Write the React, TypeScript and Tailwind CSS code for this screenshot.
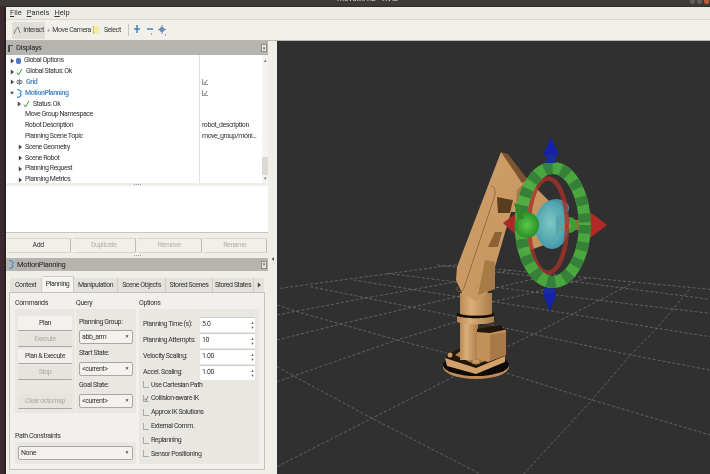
const font = { fontFamily: 'Roboto, "Noto Sans", sans-serif' }

function Arrow({ open }: { open?: boolean }) {
  return (
    <svg width="4" height="6" viewBox="0 0 5 6" className="shrink-0">
      {open ? <path d="M0 1.5h5L2.5 5z" fill="#444" /> : <path d="M1 0l4 3-4 3z" fill="#444" />}
    </svg>
  )
}

function RowIcon({ kind }: { kind: string }) {
  if (kind === 'globe') return <div className="w-[5px] h-[6px] rounded-[2px] bg-[#4f74c4] shrink-0" />
  if (kind === 'check')
    return (
      <svg width="7" height="8" viewBox="0 0 7 8" className="shrink-0">
        <path d="M1 4.5l1.5 2.5L6 1" fill="none" stroke="#3f9a3a" strokeWidth="1" />
      </svg>
    )
  if (kind === 'grid')
    return (
      <svg width="7" height="6" viewBox="0 0 7 6" className="shrink-0">
        <path d="M0 3h7M3.5 0v6M1 1.500h5M1 4.500h5" fill="none" stroke="#667" strokeWidth="0.8" />
      </svg>
    )
  return (
    <svg width="6" height="9" viewBox="0 0 6 9" className="shrink-0">
      <path d="M1 .5C5 1 6 3 4 4.500 6 6 5 8 1 8.500" fill="none" stroke="#3c8fd8" strokeWidth="1.200" />
    </svg>
  )
}

const rows = [
  { arrow: 'r', icon: 'globe', pad: 4, label: 'Global Options' },
  { arrow: 'r', icon: 'check', pad: 4, label: 'Global Status: Ok' },
  { arrow: 'r', icon: 'grid', pad: 4, label: 'Grid', blue: true, box: true },
  { arrow: 'd', icon: 'mp', pad: 4, label: 'MotionPlanning', blue: true, box: true },
  { arrow: 'r', icon: 'check', pad: 11, label: 'Status: Ok' },
  { pad: 18, label: 'Move Group Namespace' },
  { pad: 18, label: 'Robot Description', value: 'robot_description' },
  { pad: 18, label: 'Planning Scene Topic', value: 'move_group/moni...' },
  { arrow: 'r', pad: 12, label: 'Scene Geometry' },
  { arrow: 'r', pad: 12, label: 'Scene Robot' },
  { arrow: 'r', pad: 12, label: 'Planning Request' },
  { arrow: 'r', pad: 12, label: 'Planning Metrics' },
]

function MiniCheck({ checked }: { checked?: boolean }) {
  return (
    <div className="w-[6px] h-[6px] border-l border-b border-[#9a9a96] bg-white flex items-center justify-center shrink-0">
      {checked && (
        <svg width="6" height="6" viewBox="0 0 6 6">
          <path d="M1 3l1.200 2L5 .5" fill="none" stroke="#444" strokeWidth="0.8" />
        </svg>
      )}
    </div>
  )
}

function DisplaysTree() {
  return (
    <div className="h-[128px] bg-white flex overflow-hidden text-[7px] tracking-[-0.45px] text-[#333]">
      <div className="w-[194px] pt-[0.5px] border-r border-[#e2e0dc]">
        {rows.map((r) => (
          <div key={r.label} className="h-[10.8px] flex items-center gap-[2px] leading-none whitespace-nowrap" style={{ paddingLeft: r.pad }}>
            {r.arrow && <Arrow open={r.arrow === 'd'} />}
            {r.icon && <RowIcon kind={r.icon} />}
            <span className={r.blue ? 'text-[#4a86c8] font-semibold ml-[1px]' : 'ml-[1px]'}>{r.label}</span>
          </div>
        ))}
      </div>
      <div className="w-[62px] pt-[0.5px]">
        {rows.map((r) => (
          <div key={r.label} className="h-[10.8px] pl-[2px] flex items-center leading-none whitespace-nowrap">
            {r.box && <MiniCheck checked />}
            {r.value}
          </div>
        ))}
      </div>
      <div className="w-[6px] bg-[#f4f3f0] flex flex-col items-center">
        <div className="text-[5px] leading-[10px] text-[#777]">▴</div>
        <div className="mt-[92px] w-full h-[18px] bg-[#dcdad5]" />
        <div className="text-[5px] leading-[6px] text-[#777]">▾</div>
      </div>
    </div>
  )
}

function Dots({ h = 3 }: { h?: number }) {
  return (
    <div className="flex items-center justify-center gap-[1px]" style={{ height: h }}>
      <span className="w-[1px] h-[1px] bg-[#999]" />
      <span className="w-[1px] h-[1px] bg-[#999]" />
      <span className="w-[1px] h-[1px] bg-[#999]" />
      <span className="w-[1px] h-[1px] bg-[#999]" />
    </div>
  )
}

function DockClose() {
  return (
    <div className="ml-auto mr-[1px] w-[6px] h-[8px] border border-[#8d8b86] bg-[#e8e6e1] flex items-center justify-center text-[5px] leading-none text-[#444]">
      ×
    </div>
  )
}

function WideButton({ label, disabled }: { label: string; disabled?: boolean }) {
  return (
    <div
      className={`flex-1 h-[15px] flex items-center justify-center rounded-[1px] border-t border-b border-[#d6d4ce] border-r-[#bdbbb5] border-r bg-[#f1efea] text-[7px] tracking-[-0.4px] ${
        disabled ? 'text-[#b3b1ac]' : 'text-[#333]'
      }`}
    >
      {label}
    </div>
  )
}

function CmdButton({ label, disabled, h = 15 }: { label: string; disabled?: boolean; h?: number }) {
  return (
    <div
      className={`rounded-[1px] border-b border-[#aaa8a2] flex items-center justify-center text-[7px] tracking-[-0.45px] ${
        disabled ? 'bg-[#e6e4de] text-[#aeaca6]' : 'bg-[#f3f1ed] text-[#333]'
      }`}
      style={{ height: h }}
    >
      {label}
    </div>
  )
}

function Combo({ label }: { label: string }) {
  return (
    <div className="h-[14px] rounded-[2px] border border-[#a9a7a1] bg-[#f4f2ee] flex items-center justify-between px-[2px] text-[7px] tracking-[-0.4px] text-[#333]">
      <span>{label}</span>
      <span className="text-[5px] text-[#555] mr-[1px]">▼</span>
    </div>
  )
}

function Spin({ label, value }: { label: string; value: string }) {
  return (
    <div className="h-[16px] flex items-center text-[7px] tracking-[-0.4px] text-[#333]">
      <span className="w-[61px] pl-[4px] whitespace-nowrap">{label}</span>
      <div className="w-[55px] h-[15px] bg-white border-t border-[#cfcdc8] flex items-center justify-between pl-[2px] pr-[1px]">
        <span>{value}</span>
        <span className="flex flex-col text-[4px] leading-[5px] text-[#666]">
          <span>▲</span>
          <span>▼</span>
        </span>
      </div>
    </div>
  )
}

function Check({ label, checked }: { label: string; checked?: boolean }) {
  return (
    <div className="h-[13.8px] pl-[4px] flex items-center gap-[2px] text-[7px] tracking-[-0.45px] text-[#333] whitespace-nowrap">
      <div className="w-[6px] h-[7px] border-l border-b border-[#aaa] flex items-center justify-center">
        {checked && (
          <svg width="6" height="7" viewBox="0 0 6 7">
            <path d="M1 3.500l1.200 2.500L5 .5" fill="none" stroke="#444" strokeWidth="0.8" />
          </svg>
        )}
      </div>
      {label}
    </div>
  )
}

function GroupLabel({ children }: { children: string }) {
  return <div className="h-[11px] leading-[11px] text-[7px] tracking-[-0.4px] text-[#333]">{children}</div>
}

const tabs = [
  { label: 'Context', w: 32 },
  { label: 'Planning', w: 32, active: true },
  { label: 'Manipulation', w: 44 },
  { label: 'Scene Objects', w: 48 },
  { label: 'Stored Scenes', w: 47 },
  { label: 'Stored States', w: 41 },
]

function PlanningPanel() {
  return (
    <div className="flex-1 px-[3px] pb-[4px] flex flex-col min-h-0">
      <div className="h-[16px] mt-[5px] flex px-[1px] text-[7px] tracking-[-0.45px] text-[#333]">
        {tabs.map((t) => (
          <div
            key={t.label}
            className={`flex items-center justify-center whitespace-nowrap overflow-hidden border-r border-[#cfcdc7] ${
              t.active ? 'bg-[#f5f4f0] border-t border-t-[#cfcdc7]' : 'bg-[#e4e2dc] mt-[2px]'
            }`}
            style={{ width: t.w }}
          >
            {t.label}
          </div>
        ))}
        <div className="w-[10px] mt-[2px] bg-[#e4e2dc] flex items-center justify-center">
          <Arrow />
        </div>
      </div>
      <div className="flex-1 border border-[#c4c2bc] bg-[#f2f0ec] px-[5px] pt-[5px] flex gap-[3px]">
        <div className="w-[121px] flex flex-col">
          <div className="flex gap-[1px]">
            <div className="w-[60px]">
              <GroupLabel>Commands</GroupLabel>
              <div className="h-[104px] bg-[#e9e7e2] px-[3px] pt-[7px] flex flex-col">
                <CmdButton label="Plan" />
                <div className="h-[2px]" />
                <CmdButton label="Execute" disabled h={14} />
                <div className="h-[2px]" />
                <CmdButton label="Plan & Execute" />
                <div className="h-[2px]" />
                <CmdButton label="Stop" disabled h={14} />
                <div className="h-[14px]" />
                <CmdButton label="Clear octomap" disabled />
              </div>
            </div>
            <div className="w-[60px]">
              <GroupLabel>Query</GroupLabel>
              <div className="h-[104px] bg-[#e9e7e2] px-[3px] pt-[6px] flex flex-col text-[7px] tracking-[-0.4px] text-[#333]">
                <div className="h-[15px] leading-[14px]">Planning Group:</div>
                <Combo label="abb_arm" />
                <div className="h-[18px] leading-[18px]">Start State:</div>
                <Combo label="<current>" />
                <div className="h-[18px] leading-[18px]">Goal State:</div>
                <Combo label="<current>" />
              </div>
            </div>
          </div>
          <div className="h-[18px]" />
          <GroupLabel>Path Constraints</GroupLabel>
          <div className="h-[22px] bg-[#e9e7e2] px-[3px] pt-[4px]">
            <Combo label="None" />
          </div>
        </div>
        <div className="w-[121px] flex flex-col">
          <GroupLabel>Options</GroupLabel>
          <div className="h-[155px] bg-[#e9e7e2] pt-[7px]">
            <Spin label="Planning Time (s):" value="5.0" />
            <Spin label="Planning Attempts:" value="10" />
            <Spin label="Velocity Scaling:" value="1.00" />
            <Spin label="Accel. Scaling:" value="1.00" />
            <div className="-mt-[2px]" />
            <Check label="Use Cartesian Path" />
            <Check label="Collision-aware IK" checked />
            <Check label="Approx IK Solutions" />
            <Check label="External Comm." />
            <Check label="Replanning" />
            <Check label="Sensor Positioning" />
          </div>
        </div>
      </div>
    </div>
  )
}

function LeftPanel() {
  return (
    <div className="w-[262px] shrink-0 flex flex-col" style={font}>
      <div className="h-[14px] bg-[#b6b4af] flex items-center pl-[2px] gap-[3px] text-[7.5px] tracking-[-0.3px] text-[#222]">
        <div className="w-[5px] h-[7px] border-l-2 border-t border-[#45505c]" />
        Displays
        <DockClose />
      </div>
      <DisplaysTree />
      <Dots />
      <div className="h-[47px] bg-white border-b border-[#c8c6c0]" />
      <div className="flex h-[20px] pt-[5px] gap-[2px] px-[1px]">
        <WideButton label="Add" />
        <WideButton label="Duplicate" disabled />
        <WideButton label="Remove" disabled />
        <WideButton label="Rename" disabled />
      </div>
      <Dots h={5} />
      <div className="h-[13px] bg-[#b6b4af] flex items-center pl-[2px] gap-[3px] text-[7.5px] tracking-[-0.3px] text-[#222]">
        <RowIcon kind="mp" />
        MotionPlanning
        <DockClose />
      </div>
      <PlanningPanel />
    </div>
  )
}

function Toolbar() {
  return (
    <div className="h-[21px] bg-[#f2f0eb] border-b border-[#b9b7b1] flex items-center pl-[6px] text-[7px] tracking-[-0.4px] text-[#3a3a3a] whitespace-nowrap" style={font}>
      <div className="w-[33px] h-[17px] bg-[#e0ded8] flex items-center justify-center gap-[2px]">
        <svg width="8" height="9" viewBox="0 0 8 9">
          <path d="M1 8l1-3 2-3 1-1 .5 1.500L7 7" fill="none" stroke="#666" strokeWidth="0.8" />
        </svg>
        Interact
      </div>
      <div className="ml-[2px] flex items-center gap-[2px] w-[44px]">
        <svg width="7" height="9" viewBox="0 0 9 9">
          <path d="M4.500 0v9M0 4.500h9M2 2l5 5M7 2L2 7" stroke="#7a7a7a" strokeWidth="0.9" />
        </svg>
        Move Camera
      </div>
      <div className="ml-[2px] flex items-center gap-[2px]">
        <div className="w-[6px] h-[8px] bg-[#f4eda0] border-l border-[#c9b94e]" />
        <span className="w-[1px]" />
        Select
      </div>
      <div className="ml-[7px] w-[1px] h-[12px] bg-[#c5c3bd]" />
      <svg width="44" height="14" viewBox="0 0 44 14" className="ml-[3px]">
        <path d="M5 2v8M2 6h6" stroke="#4a80bb" strokeWidth="1.500" />
        <path d="M15 6h6" stroke="#4a80bb" strokeWidth="1.500" />
        <path d="M19 11h1" stroke="#555" />
        <circle cx="30" cy="6.500" r="2.500" fill="#6f8db0" />
        <path d="M30 2v9M26 6.500h8" stroke="#6f8db0" />
        <path d="M33 12h1" stroke="#555" />
      </svg>
    </div>
  )
}

const gridDown = [
  '0,350 50,378 285,505 610,672',
  '0,165 60,185 360,270 530,315 690,370 945,450 1299,555',
  '100,110 200,130 420,175 540,200 690,235 780,255 1060,315 1299,360',
  '230,90 540,140 650,155 900,195 1140,235 1299,260',
  '330,70 530,95 760,125 1000,155 1299,190',
  '480,45 740,75 1299,148',
  '530,45 1299,118',
]
const gridUp = [
  '0,650 285,505 530,380 690,290 775,250 1070,98',
  '0,395 50,378 360,270 540,215 650,155 760,130 930,85',
  '0,270 200,220 540,140 650,115 800,80',
  '0,195 260,145 540,95 700,60',
  '10,115 230,85 530,45',
  '740,672 945,450 1060,315 1140,235 1240,115',
]

function Scene() {
  return (
    <svg viewBox="277 41 433 433" className="w-full h-full block">
      <defs>
        <linearGradient id="col" x1="0" x2="1" y1="0" y2="0">
          <stop offset="0" stopColor="#b98a55" />
          <stop offset="0.35" stopColor="#dcae78" />
          <stop offset="1" stopColor="#a97c4a" />
        </linearGradient>
        <linearGradient id="gloss" x1="0" x2="1" y1="0" y2="1">
          <stop offset="0" stopColor="#d2a06a" />
          <stop offset="1" stopColor="#c0905c" />
        </linearGradient>
        <radialGradient id="ball" cx="0.45" cy="0.45" r="0.6">
          <stop offset="0" stopColor="#7fc9c4" />
          <stop offset="1" stopColor="#3f95a8" />
        </radialGradient>
        <radialGradient id="greenball" cx="0.5" cy="0.5" r="0.55">
          <stop offset="0" stopColor="#5cc94a" />
          <stop offset="1" stopColor="#258a24" />
        </radialGradient>
      </defs>

      <g transform="translate(277 250) scale(0.3333)" fill="none" stroke="#7a7a7a" strokeWidth="2" strokeDasharray="9 6">
        {gridDown.map((p) => <polyline key={p} points={p} />)}
        {gridUp.map((p) => <polyline key={p} points={p} />)}
      </g>

      {/* base */}
      <ellipse cx="476" cy="367" rx="33" ry="12" fill="#c08c55" />
      <ellipse cx="476" cy="365" rx="33" ry="11" fill="#0c0a08" />
      <path d="M445 358l13-9h42l5 7-29 12z" fill="#231507" />
      <path d="M455 355l7-5 14 10 14-8 10 2-24 11z" fill="#b88750" />
      <path d="M445 358l2 8 29 8 29-12v-6l-29 12z" fill="#d3a26c" />
      <circle cx="450" cy="355" r="3" fill="#c99a63" stroke="#111" strokeWidth="0.8" />
      <rect x="472" y="359" width="8" height="5" fill="#c99a63" stroke="#332" strokeWidth="0.5" />
      <rect x="460" y="322" width="18" height="38" fill="url(#col)" />
      <path d="M477 330h29v25l-18 7-11-3z" fill="#c29159" />
      <path d="M490 335l16-3v23l-16 6z" fill="#a97a49" />
      <path d="M477 329l24-4 3 5-14 3-13-1z" fill="#231507" />
      <path d="M457 316h37v6c-8 3-29 3-37 0z" fill="url(#col)" />
      <path d="M457 313c10 4 27 4 37 0v3c-8 3-29 3-37 0z" fill="#120b04" />

      {/* upper arm */}
      <path d="M460 293h32v21c-8 2-24 2-32 0z" fill="url(#col)" />
      <path d="M501 152l27 28 24 24-5 40-22 8-10-40-4 0-16 55-7 25-11 10-15-9-6-13 1-13 34-89z" fill="url(#gloss)" />
      <path d="M501 152l7 2 20 26-6 3z" fill="#7a5430" />
      <path d="M497 197l16 3-3 13-12 0z" fill="#5a3c1e" />
      <path d="M495 232h7l-4 15-10 0z" fill="#8a6234" />
      <path d="M485 260l10 2 0 27-17 6 4-20z" fill="#a77b48" />
      <path d="M491 186c4 0 5 6 3 12l-30 90c-2 5-8 5-7-1" fill="none" stroke="#8a6338" strokeWidth="0.8" />
      <path d="M517 190l9-9 6 5-8 15-8 3z" fill="#a87c4a" />

      {/* back half of the markers */}
      <path d="M503 223l12-9v20z" fill="#a82a25" />
      <path d="M556 220h36v10h-36z" fill="#a0692f" />
      <path d="M590 212l17 13-17 13z" fill="#b32a25" />

      {/* sphere and handles */}
      <ellipse cx="556" cy="208" rx="13" ry="9" fill="#4a93a2" />
      <circle cx="569" cy="225" r="8" fill="#3c9f33" />
      <ellipse cx="552" cy="225" rx="17" ry="24" fill="url(#ball)" />
      <path d="M560 215h8v16h-8l-4 6 0-20z" fill="#55a7ac" />
      <circle cx="567" cy="226" r="3.500" fill="#b98d5e" />
      <circle cx="567" cy="226" r="1.500" fill="#8c6236" />

      {/* rings */}
      <ellipse cx="548" cy="225.500" rx="19" ry="47" fill="none" stroke="#a8322b" strokeWidth="4.500" opacity="0.8" />
      <ellipse cx="552.700" cy="225" rx="32" ry="57" fill="none" stroke="#4cae40" strokeWidth="12" opacity="0.95" />
      <ellipse cx="552.700" cy="225" rx="32" ry="57" fill="none" stroke="#37803a" strokeWidth="12" pathLength="100" strokeDasharray="3 3" />

      {/* left handle sits over the ring */}
      <ellipse cx="527" cy="225" rx="12" ry="13" fill="url(#greenball)" />
      <path d="M514 203l6 2 4 14-6 0z" fill="#2f8a2a" />

      {/* blue arrows */}
      <path d="M551 137l8 18h-16z" fill="#1322a8" />
      <rect x="546" y="155" width="10" height="8" fill="#1b2b9a" />
      <path d="M543 293h14l-7.500 19z" fill="#1322a8" />
      <rect x="544" y="288" width="11" height="5" fill="#1b2b9a" />
    </svg>
  )
}

export default function App() {
  return (
    <div className="w-[710px] h-[474px] flex flex-col overflow-hidden bg-[#f0eee9] blur-[0.3px]">
      <div className="h-[7px] bg-[#3c3b37] border-b border-[#2e2d2a] flex overflow-hidden" style={font}>
        <div className="w-[337px]" />
        <div className="-mt-[6px] text-[8px] leading-[10px] text-[#dedcd6]">moveit.rviz - RViz</div>
        <div className="ml-auto flex gap-[2px] pr-[1px]">
          <span className="w-[5px] h-[4px] rounded-b-full bg-[#5f5e5a]" />
          <span className="w-[5px] h-[4px] rounded-b-full bg-[#5f5e5a]" />
          <span className="w-[5px] h-[4px] rounded-b-full bg-[#c0583a]" />
        </div>
      </div>
      <div className="flex-1 flex min-h-0">
        <div className="w-[6px] shrink-0 flex">
          <div className="w-[4px] bg-[#3b2b30]" />
          <div className="w-[2px] bg-[#26221f]" />
        </div>
        <div className="flex-1 flex flex-col min-w-0">
          <div className="h-[13px] bg-[#ecebe6] border-b border-[#d8d6d0] flex items-center gap-[5px] pl-[4px] text-[7.5px] text-[#333]" style={font}>
            <span><u>F</u>ile</span>
            <span><u>P</u>anels</span>
            <span><u>H</u>elp</span>
          </div>
          <Toolbar />
          <div className="flex-1 flex min-h-0">
            <LeftPanel />
            <div className="w-[9px] shrink-0 bg-[#f0eee9] flex flex-col items-center pt-[215px]">
              <div className="rotate-180 scale-75"><Arrow /></div>
            </div>
            <div className="flex-1 bg-[#303030] min-w-0">
              <Scene />
            </div>
          </div>
        </div>
      </div>
    </div>
  )
}
